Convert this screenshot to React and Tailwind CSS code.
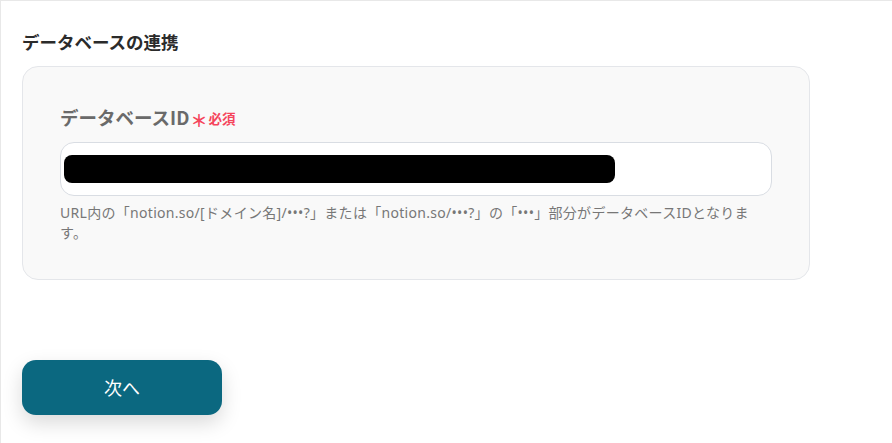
export default function App() {
  return (
    <div
      className="w-[892px] h-[443px] bg-white border-t border-l border-[#e8e8e8] overflow-hidden"
      style={{ fontFamily: '"Noto Sans CJK JP", "Noto Sans", sans-serif' }}
    >
      <div className="pl-[21px] pt-[29px]">
        <h2 className="text-[17.5px] leading-[24px] font-bold text-[#2b2b2b]">データベースの連携</h2>

        {/* card */}
        <div className="mt-[12px] w-[788px] h-[214px] rounded-[16px] bg-[#f9f9f9] border border-[#e4e6ea] px-[37px] pt-[38px]">
          <div className="flex items-center h-[26px]">
            <span className="text-[18.5px] font-bold text-[#6a6a6a]">データベースID</span>
            <span className="ml-[1px] text-[17px] font-bold text-[#f5455c] leading-none mt-[2px]">＊</span>
            <span className="ml-[1px] text-[13.5px] font-bold text-[#f5455c]">必須</span>
          </div>
          <div className="mt-[11px] h-[54px] rounded-[14px] bg-white border border-[#d9dde3] flex items-center pl-[3px]">
            <div className="w-[551px] h-[28px] rounded-[8px] bg-black" />
          </div>
          <p
            className="mt-[7px] max-w-[697px] text-[14px] leading-[20px] tracking-[0.3px] text-[#777777]"
            style={{ fontFamily: '"Noto Sans", "Noto Sans CJK JP", sans-serif' }}
          >
            URL内の「notion.so/[ドメイン名]/•••?」または「notion.so/•••?」の「•••」部分がデータベースIDとなります。
          </p>
        </div>

        <button className="mt-[80px] w-[200px] h-[55px] rounded-[14px] bg-[#0b6880] text-white text-[18px] shadow-[0_8px_20px_rgba(0,0,0,0.15)]">
          次へ
        </button>
      </div>
    </div>
  )
}
